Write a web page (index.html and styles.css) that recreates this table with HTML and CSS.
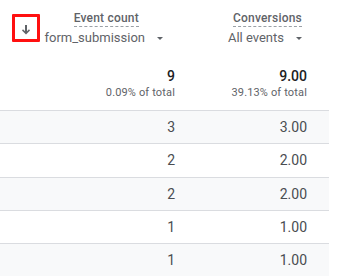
FILE: index.html
```html
<!DOCTYPE html>
<html lang="en">
<head>
<meta charset="utf-8">
<title>Events table</title>
<link rel="stylesheet" href="styles.css">
</head>
<body>
<div class="table">
  <div class="row head">
    <div class="sortcell">
      <div class="sortbox">
        <svg class="sorticon" viewBox="0 0 8 10" width="8" height="10"><path d="M3 0h2v6.3l2-2L8 5.5 4 9.5 0 5.5l1-1.2 2 2z" fill="#5f6368"/></svg>
      </div>
    </div>
    <div class="hcell c1">
      <div class="hblock">
        <span class="hlabel">Event count</span>
        <div class="hdrop"><span>form_submission</span><svg width="6" height="3" viewBox="0 0 6 3"><polygon points="0,0 6,0 3,3" fill="#5f6368"/></svg></div>
      </div>
    </div>
    <div class="hcell c2">
      <div class="hblock">
        <span class="hlabel">Conversions</span>
        <div class="hdrop"><span>All events</span><svg width="6" height="3" viewBox="0 0 6 3"><polygon points="0,0 6,0 3,3" fill="#5f6368"/></svg></div>
      </div>
    </div>
  </div>
  <div class="row totals">
    <div></div>
    <div class="num c1"><div class="tval">9</div><div class="tsub">0.09% of total</div></div>
    <div class="num c2"><div class="tval">9.00</div><div class="tsub">39.13% of total</div></div>
  </div>
  <div class="row data shade"><div></div><div class="num c1">3</div><div class="num c2">3.00</div></div>
  <div class="row data"><div></div><div class="num c1">2</div><div class="num c2">2.00</div></div>
  <div class="row data shade"><div></div><div class="num c1">2</div><div class="num c2">2.00</div></div>
  <div class="row data"><div></div><div class="num c1">1</div><div class="num c2">1.00</div></div>
  <div class="row data shade"><div></div><div class="num c1">1</div><div class="num c2">1.00</div></div>
</div>
</body>
</html>
```
FILE: styles.css
```css
html, body {
  margin: 0;
  padding: 0;
  background: #ffffff;
}
body {
  font-family: Roboto, "Liberation Sans", Arial, sans-serif;
  color: #3c4043;
}
.table {
  width: 329px;
}
.row {
  display: grid;
  grid-template-columns: 45px 138px 146px;
}
.head {
  height: 52px;
}
.sortcell {
  padding: 14px 0 0 12px;
}
.sortbox {
  width: 28px;
  height: 28px;
  box-sizing: border-box;
  border: 3px solid #ff1010;
  border-radius: 1px;
  display: flex;
  align-items: center;
  justify-content: center;
  padding-top: 3px;
  padding-right: 1px;
}
.sorticon {
  display: block;
}
.hcell {
  display: flex;
  justify-content: flex-end;
  padding-top: 11px;
}
.hcell.c1 {
  padding-right: 15px;
}
.hcell.c2 {
  padding-right: 22px;
}
.hblock {
  display: flex;
  flex-direction: column;
  align-items: center;
}
.hlabel {
  font-size: 12px;
  font-weight: 500;
  line-height: 15px;
  letter-spacing: 0.2px;
  color: #5f6368;
  border-bottom: 1px dashed #9aa0a6;
}
.hdrop {
  display: flex;
  align-items: center;
  gap: 12px;
  margin-top: 2px;
  padding-right: 5px;
  font-size: 13px;
  line-height: 18px;
  color: #5f6368;
}
.hdrop svg {
  display: block;
}
.num {
  text-align: right;
}
.num.c1 {
  padding-right: 8px;
}
.num.c2 {
  padding-right: 22px;
}
.totals {
  padding: 14px 0 10px;
}
.tval {
  font-size: 14px;
  font-weight: 500;
  line-height: 20px;
  color: #202124;
}
.tsub {
  font-size: 11px;
  line-height: 14px;
  letter-spacing: 0.15px;
  color: #5f6368;
}
.data {
  border-top: 1px solid #dadce0;
  min-height: 32.3px;
  align-items: center;
  font-size: 14px;
  color: #4a4d51;
}
.shade {
  background: #f8f9fa;
}
```
